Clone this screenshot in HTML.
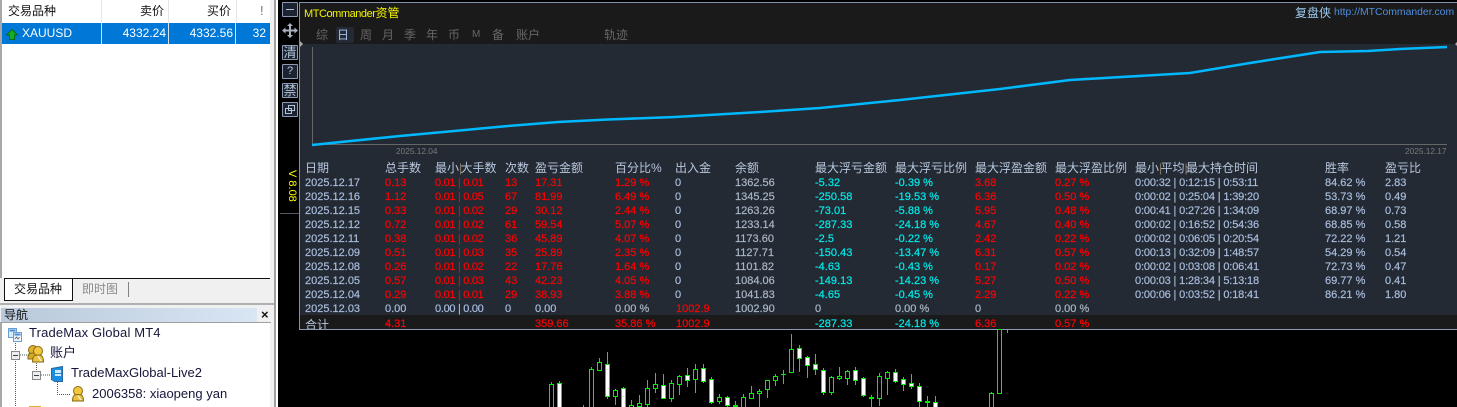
<!DOCTYPE html>
<html><head><meta charset="utf-8">
<style>
html,body{margin:0;padding:0;width:1457px;height:407px;overflow:hidden;background:#000;font-family:"Liberation Sans","Noto Sans CJK SC",sans-serif}
.a{position:absolute;white-space:nowrap}
#l{position:absolute;left:0;top:0;width:278px;height:407px;background:#f0f0f0}
.h{position:absolute;top:0;font-size:12px;line-height:22px;color:#111}
.s{position:absolute;top:23px;height:21px;font-size:12px;line-height:21px;color:#fff;text-align:right}
.t{position:absolute;font-size:13px;line-height:16px;color:#16163a;white-space:nowrap}
.b{position:absolute;left:282px;width:14px;height:13px;border:1px solid #8b9ab5;background:#1b2430;color:#b6c4da;font-size:13px;line-height:13px;text-align:center;overflow:hidden;border-radius:1px}
.m{position:absolute;top:27px;font-size:12px;line-height:16px;color:#666}
.r{position:absolute;left:300px;width:1157px;height:14px;font-size:11px;line-height:14px;color:#a8bcdc;-webkit-text-stroke:.2px}
.r span{position:absolute;top:0;white-space:nowrap}
.tot span{top:1px}
.hd{font-size:12px;color:#b8c7de;-webkit-text-stroke:0}
.c1{left:5px}.c2{left:85px}.c3{left:135px;letter-spacing:-.3px}.c4{left:205px}.c5{left:235px}.c6{left:315px}.c7{left:375px}.c8{left:435px}.c9{left:515px}.c10{left:595px}.c11{left:675px}.c12{left:755px}.c13{left:835px;letter-spacing:-.15px}.c14{left:1025px}.c15{left:1085px}
.hd .c3,.hd .c13{letter-spacing:0}
.e{color:#ff0000}.y{color:#00ecec}.g{color:#aab6c6}
i{font-style:normal;display:inline-block;width:1.5px;color:#8a7a60}
</style></head><body>
<div id="l">
 <div class="a" style="left:0;top:0;width:2px;height:278px;background:#a8a8a8"></div>
 <div class="a" style="left:2px;top:0;width:268px;height:278px;background:#fff"></div>
 <div class="a" style="left:101px;top:0;width:1px;height:22px;background:#e5e5e5"></div>
 <div class="a" style="left:168px;top:0;width:1px;height:22px;background:#e5e5e5"></div>
 <div class="a" style="left:236px;top:0;width:1px;height:22px;background:#e5e5e5"></div>
 <div class="h" style="left:8px">交易品种</div>
 <div class="h" style="left:140px">卖价</div>
 <div class="h" style="left:207px">买价</div>
 <div class="h" style="left:260px;color:#777;font-size:13px">!</div>
 <div class="a" style="left:2px;top:23px;width:268px;height:21px;background:#0078d7"></div>
 <div class="a" style="left:101px;top:23px;width:1px;height:21px;background:#cfe3f5"></div>
 <div class="a" style="left:168px;top:23px;width:1px;height:21px;background:#cfe3f5"></div>
 <div class="a" style="left:235px;top:23px;width:1px;height:21px;background:#cfe3f5"></div>
 <svg class="a" style="left:6px;top:29px" width="12" height="11"><path d="M6 .5 11.500 6H8.500V10.500H3.500V6H.5Z" fill="#12b020" stroke="#0a6a20"/></svg>
 <div class="s" style="left:22px;text-align:left">XAUUSD</div>
 <div class="s" style="left:102px;width:64px">4332.24</div>
 <div class="s" style="left:169px;width:64px">4332.56</div>
 <div class="s" style="left:236px;width:30px">32</div>
 <div class="a" style="left:270px;top:0;width:4px;height:407px;background:#f0f0f0"></div>
 <div class="a" style="left:274px;top:0;width:2px;height:407px;background:#9f9f9f"></div>
 <div class="a" style="left:276px;top:0;width:2px;height:407px;background:#fff"></div>
 <div class="a" style="left:4px;top:278px;width:266px;height:1px;background:#111"></div>
 <div class="a" style="left:4px;top:278px;width:67px;height:21px;background:#fff;border:1px solid #111"></div>
 <div class="a" style="left:14px;top:281px;font-size:12px;line-height:17px;color:#111">交易品种</div>
 <div class="a" style="left:82px;top:281px;font-size:12px;line-height:17px;color:#8a8a8a">即时图</div>
 <div class="a" style="left:128px;top:282px;width:1px;height:15px;background:#808080"></div>
 <div class="a" style="left:0;top:303px;width:274px;height:2px;background:#b0b0b0"></div>
 <div class="a" style="left:1px;top:308px;width:256px;height:14px;background:linear-gradient(90deg,#b9c8da,#d8e6f4)"></div>
 <div class="a" style="left:4px;top:307px;font-size:12px;line-height:16px;color:#111">导航</div>
 <div class="a" style="left:261px;top:307px;font-size:13px;line-height:15px;font-weight:bold;color:#111">×</div>
 <div class="a" style="left:0;top:322px;width:271px;height:1px;background:#a0a0a0"></div>
 <div class="a" style="left:0;top:323px;width:2px;height:84px;background:#a8a8a8"></div>
 <div class="a" style="left:2px;top:323px;width:268px;height:84px;background:#fff"></div>
 <svg class="a" style="left:0;top:323px" width="100" height="84">
  <path d="M15.500 20V84M36.500 36V47M57.500 59V71.500H70M20 32H27M41 52H50" fill="none" stroke="#555" stroke-dasharray="1 1"/>
  <rect x="8.500" y="5.500" width="8" height="9" fill="#d9ecfb" stroke="#6aa0d0"/><rect x="13.500" y="9.500" width="8" height="9" fill="#eef7ff" stroke="#6aa0d0"/><path d="M9.500 7.500h6M14.500 11.500h6" stroke="#4a8ad0" stroke-width="2"/><path d="M15 16l1.500-2 1.500 2 1.500-2" fill="none" stroke="#555" stroke-width=".7"/>
  <rect x="11.500" y="28.500" width="8" height="8" fill="#eee" stroke="#888"/><path d="M13 32.500h5" stroke="#345"/>
  <rect x="32.500" y="48.500" width="8" height="8" fill="#eee" stroke="#888"/><path d="M34 52.500h5" stroke="#345"/>
  <circle cx="31" cy="33" r="3.500" fill="#33c033"/>
  <circle cx="33" cy="27" r="4.500" fill="#e0b030" stroke="#8a6a10"/><path d="M28 36c0-6 3-6 5-6s5 0 5 6Z" fill="#d8a828" stroke="#8a6a10"/>
  <circle cx="38" cy="28" r="4.500" fill="#f0c840" stroke="#8a6a10"/><path d="M32.500 39c0-7 3-7 5.500-7s5.500 0 5.500 7Z" fill="#ecc040" stroke="#8a6a10"/><path d="M38 33l3 5" stroke="#fff"/>
  <path d="M51.500 45.500 62.500 43.500V58.500L54.500 58.500 51.500 56.500Z" fill="#1a8de0" stroke="#2a6aa0"/><path d="M55 47h6v3h-6ZM55 51h6v2h-6Z" fill="#cfeafc"/>
  <circle cx="78" cy="68" r="4.500" fill="#f0c840" stroke="#8a6a10"/><path d="M72.500 78c0-6.500 3-6.500 5.500-6.500s5.500 0 5.500 6.500Z" fill="#ecc040" stroke="#8a6a10"/><path d="M78 73l3 4" stroke="#fff"/>
  <rect x="29" y="83" width="12" height="1" fill="#e0b030"/>
 </svg>
 <div class="t" style="left:29px;top:325px;letter-spacing:.15px">TradeMax Global MT4</div>
 <div class="t" style="left:50px;top:345px">账户</div>
 <div class="t" style="left:71px;top:365px">TradeMaxGlobal-Live2</div>
 <div class="t" style="left:92px;top:386px">2006358: xiaopeng yan</div>
</div>

<div class="b" style="top:2px;"><span style="display:block;width:8px;height:1px;background:#b6c4da;margin:6px auto 0"></span></div>
<svg class="a" style="left:282px;top:23px" width="16" height="15"><path d="M8 0 11 3H9V6.500H12.500V4.500L16 7.500 12.500 10.500V8.500H9V12H11L8 15 5 12H7V8.500H3.500V10.500L0 7.500 3.500 4.500V6.500H7V3H5Z" fill="#a9b1bd"/></svg>
<div class="b" style="top:45px">清</div>
<div class="b" style="top:64px;font-size:11px">?</div>
<div class="b" style="top:83px">禁</div>
<div class="b" style="top:102px"><svg width="14" height="13" style="display:block"><path d="M5.500 2.500h6v5h-6ZM2.500 5.500h6v5h-6Z" fill="#1b2430" stroke="#b6c4da"/></svg></div>
<div class="a" style="left:280px;top:213px;width:19px;height:1px;background:#556"></div>
<div class="a" style="left:286px;top:170px;writing-mode:vertical-rl;font-size:11px;line-height:12px;color:#ffff00">V 8.08</div>

<div class="a" style="left:299px;top:2px;width:1158px;height:327px;background:#232a33"></div>
<div class="a" style="left:299px;top:2px;width:1158px;height:1px;background:#8290ab"></div>
<div class="a" style="left:299px;top:2px;width:1px;height:328px;background:#8290ab"></div>
<div class="a" style="left:299px;top:329px;width:1158px;height:1px;background:#8c9ab4"></div>
<div class="a" style="left:300px;top:3px;width:1157px;height:41px;background:#1a1a1a"></div>
<div class="a" style="left:300px;top:315px;width:1157px;height:14px;background:#1a1a1a"></div>
<div class="a" style="left:304px;top:5px;font-size:11px;line-height:16px;color:#f4f400;letter-spacing:-.45px">MTCommander<span style="font-size:12px;letter-spacing:0">资管</span></div>
<div class="a" style="left:1295px;top:5px;font-size:12px;line-height:16px;color:#9ccaf0">复盘侠</div>
<div class="a" style="left:1334px;top:5px;font-size:10.4px;line-height:16px;color:#4f8fe0">http://MTCommander.com</div>
<div class="a" style="left:336px;top:27px;width:18px;height:16px;background:#232a33;border-radius:2px"></div>
<div class="m" style="left:316px">综</div>
<div class="m" style="left:337px;color:#a8c2ea">日</div>
<div class="m" style="left:360px">周</div>
<div class="m" style="left:382px">月</div>
<div class="m" style="left:404px">季</div>
<div class="m" style="left:426px">年</div>
<div class="m" style="left:448px">币</div>
<div class="m" style="left:472px;font-size:10px;color:#666">M</div>
<div class="m" style="left:492px">备</div>
<div class="m" style="left:516px">账户</div>
<div class="m" style="left:604px">轨迹</div>

<svg class="a" style="left:0;top:0" width="1457" height="160">
 <path d="M300 41l3 3-3 3Z" fill="#aaa"/><path d="M1457 42v4l-2-2Z" fill="#aaa"/>
 <path d="M312.500 47V144.500H1447" fill="none" stroke="#666" shape-rendering="crispEdges"/>
 <polyline points="312,145 400,136 465,130 508,126 558,122 608,119.500 675,117 760,112 820,108 900,100 1000,89 1070,80 1190,73 1250,63 1320,52 1368,51 1400,49 1447,47" fill="none" stroke="#00b8ff" stroke-width="2.600"/>
 <text x="396" y="154" font-size="8.300" fill="#7a7a7a" font-family="Liberation Sans">2025.12.04</text>
 <text x="1405" y="154" font-size="8.300" fill="#7a7a7a" font-family="Liberation Sans">2025.12.17</text>
</svg>

<div class="r hd" style="top:161px"><span class="c1">日期</span><span class="c2">总手数</span><span class="c3">最小<i>|</i>大手数</span><span class="c4">次数</span><span class="c5">盈亏金额</span><span class="c6">百分比%</span><span class="c7">出入金</span><span class="c8">余额</span><span class="c9">最大浮亏金额</span><span class="c10">最大浮亏比例</span><span class="c11">最大浮盈金额</span><span class="c12">最大浮盈比例</span><span class="c13">最小<i>|</i>平均<i>|</i>最大持仓时间</span><span class="c14">胜率</span><span class="c15">盈亏比</span></div>

<div class="r" style="top:176px"><span class="c1">2025.12.17</span><span class="c2 e">0.13</span><span class="c3 e">0.01 | 0.01</span><span class="c4 e">13</span><span class="c5 e">17.31</span><span class="c6 e">1.29 %</span><span class="c7">0</span><span class="c8 g">1362.56</span><span class="c9 y">-5.32</span><span class="c10 y">-0.39 %</span><span class="c11 e">3.68</span><span class="c12 e">0.27 %</span><span class="c13">0:00:32 | 0:12:15 | 0:53:11</span><span class="c14">84.62 %</span><span class="c15">2.83</span></div>
<div class="r" style="top:190px"><span class="c1">2025.12.16</span><span class="c2 e">1.12</span><span class="c3 e">0.01 | 0.05</span><span class="c4 e">67</span><span class="c5 e">81.99</span><span class="c6 e">6.49 %</span><span class="c7">0</span><span class="c8 g">1345.25</span><span class="c9 y">-250.58</span><span class="c10 y">-19.53 %</span><span class="c11 e">6.36</span><span class="c12 e">0.50 %</span><span class="c13">0:00:02 | 0:25:04 | 1:39:20</span><span class="c14">53.73 %</span><span class="c15">0.49</span></div>
<div class="r" style="top:204px"><span class="c1">2025.12.15</span><span class="c2 e">0.33</span><span class="c3 e">0.01 | 0.02</span><span class="c4 e">29</span><span class="c5 e">30.12</span><span class="c6 e">2.44 %</span><span class="c7">0</span><span class="c8 g">1263.26</span><span class="c9 y">-73.01</span><span class="c10 y">-5.88 %</span><span class="c11 e">5.95</span><span class="c12 e">0.48 %</span><span class="c13">0:00:41 | 0:27:26 | 1:34:09</span><span class="c14">68.97 %</span><span class="c15">0.73</span></div>
<div class="r" style="top:218px"><span class="c1">2025.12.12</span><span class="c2 e">0.72</span><span class="c3 e">0.01 | 0.02</span><span class="c4 e">61</span><span class="c5 e">59.54</span><span class="c6 e">5.07 %</span><span class="c7">0</span><span class="c8 g">1233.14</span><span class="c9 y">-287.33</span><span class="c10 y">-24.18 %</span><span class="c11 e">4.67</span><span class="c12 e">0.40 %</span><span class="c13">0:00:02 | 0:16:52 | 0:54:36</span><span class="c14">68.85 %</span><span class="c15">0.58</span></div>
<div class="r" style="top:232px"><span class="c1">2025.12.11</span><span class="c2 e">0.38</span><span class="c3 e">0.01 | 0.02</span><span class="c4 e">36</span><span class="c5 e">45.89</span><span class="c6 e">4.07 %</span><span class="c7">0</span><span class="c8 g">1173.60</span><span class="c9 y">-2.5</span><span class="c10 y">-0.22 %</span><span class="c11 e">2.42</span><span class="c12 e">0.22 %</span><span class="c13">0:00:02 | 0:06:05 | 0:20:54</span><span class="c14">72.22 %</span><span class="c15">1.21</span></div>
<div class="r" style="top:246px"><span class="c1">2025.12.09</span><span class="c2 e">0.51</span><span class="c3 e">0.01 | 0.03</span><span class="c4 e">35</span><span class="c5 e">25.89</span><span class="c6 e">2.35 %</span><span class="c7">0</span><span class="c8 g">1127.71</span><span class="c9 y">-150.43</span><span class="c10 y">-13.47 %</span><span class="c11 e">6.31</span><span class="c12 e">0.57 %</span><span class="c13">0:00:13 | 0:32:09 | 1:48:57</span><span class="c14">54.29 %</span><span class="c15">0.54</span></div>
<div class="r" style="top:260px"><span class="c1">2025.12.08</span><span class="c2 e">0.26</span><span class="c3 e">0.01 | 0.02</span><span class="c4 e">22</span><span class="c5 e">17.76</span><span class="c6 e">1.64 %</span><span class="c7">0</span><span class="c8 g">1101.82</span><span class="c9 y">-4.63</span><span class="c10 y">-0.43 %</span><span class="c11 e">0.17</span><span class="c12 e">0.02 %</span><span class="c13">0:00:02 | 0:03:08 | 0:06:41</span><span class="c14">72.73 %</span><span class="c15">0.47</span></div>
<div class="r" style="top:274px"><span class="c1">2025.12.05</span><span class="c2 e">0.57</span><span class="c3 e">0.01 | 0.03</span><span class="c4 e">43</span><span class="c5 e">42.23</span><span class="c6 e">4.05 %</span><span class="c7">0</span><span class="c8 g">1084.06</span><span class="c9 y">-149.13</span><span class="c10 y">-14.23 %</span><span class="c11 e">5.27</span><span class="c12 e">0.50 %</span><span class="c13">0:00:03 | 1:28:34 | 5:13:18</span><span class="c14">69.77 %</span><span class="c15">0.41</span></div>
<div class="r" style="top:288px"><span class="c1">2025.12.04</span><span class="c2 e">0.29</span><span class="c3 e">0.01 | 0.01</span><span class="c4 e">29</span><span class="c5 e">38.93</span><span class="c6 e">3.88 %</span><span class="c7">0</span><span class="c8 g">1041.83</span><span class="c9 y">-4.65</span><span class="c10 y">-0.45 %</span><span class="c11 e">2.29</span><span class="c12 e">0.22 %</span><span class="c13">0:00:06 | 0:03:52 | 0:18:41</span><span class="c14">86.21 %</span><span class="c15">1.80</span></div>
<div class="r" style="top:302px"><span class="c1">2025.12.03</span><span class="c2">0.00</span><span class="c3">0.00 | 0.00</span><span class="c4">0</span><span class="c5">0.00</span><span class="c6 g">0.00 %</span><span class="c7 e" style="left:376px">1002.9</span><span class="c8 g">1002.90</span><span class="c9 g">0</span><span class="c10 g">0.00 %</span><span class="c11 g">0</span><span class="c12 g">0.00 %</span></div>
<div class="r tot" style="top:316px;height:13px;overflow:hidden"><span class="c1 hd" style="top:2px">合计</span><span class="c2 e">4.31</span><span class="c5 e">359.66</span><span class="c6 e">35.86 %</span><span class="c7 e" style="left:376px">1002.9</span><span class="c9 y">-287.33</span><span class="c10 y">-24.18 %</span><span class="c11 e">6.36</span><span class="c12 e">0.57 %</span></div>

<svg class="a" style="left:0;top:325px" width="1457" height="82" shape-rendering="crispEdges">
 <path stroke="#00f000" fill="none" d="M551.500 57V82M559.500 56V82M583.500 80V82M591.500 42V82M599.500 33V46M607.500 27V74M615.500 64V80M623.500 62V82M631.500 75V82M639.500 70V82M647.500 55V82M655.500 48V68M663.500 49V73M671.500 55V77M679.500 50V70M687.500 43V62M695.500 39V68M703.500 39V58M711.500 52V79M719.500 69V79M727.500 71V82M735.500 76V82M743.500 69V82M751.500 61V74M759.500 64V82M767.500 64V73M775.500 49V61M783.500 45V59M781 49.500H786M791.500 9V48M799.500 20V47M807.500 31V53M815.500 29V50M823.500 43V70M831.500 51V70M839.500 42V55M847.500 45V60M855.500 42V60M863.500 52V72M871.500 70V82M879.500 48V81M887.500 46V70M895.500 44V58M903.500 52V66M911.500 49V64M919.500 58V82M927.500 71V82M935.500 71V82M991.500 67V82M1007.500 5V8"/>
 <g fill="#000" stroke="#00f000">
  <rect x="549.500" y="59.500" width="4" height="30"/><rect x="589.500" y="44.500" width="4" height="45"/><rect x="597.500" y="37.500" width="4" height="8"/><rect x="613.500" y="65.500" width="4" height="6"/><rect x="629.500" y="80.500" width="4" height="6"/><rect x="637.500" y="78.500" width="4" height="3"/><rect x="645.500" y="63.500" width="4" height="16"/><rect x="653.500" y="59.500" width="4" height="4"/><rect x="669.500" y="58.500" width="4" height="15"/><rect x="677.500" y="51.500" width="4" height="8"/><rect x="693.500" y="44.500" width="4" height="10"/><rect x="717.500" y="72.500" width="4" height="4"/><rect x="741.500" y="72.500" width="4" height="15"/><rect x="749.500" y="68.500" width="4" height="5"/><rect x="757.500" y="66.500" width="4" height="2"/><rect x="765.500" y="55.500" width="4" height="9"/><rect x="773.500" y="51.500" width="4" height="4"/><rect x="789.500" y="24.500" width="4" height="23"/><rect x="829.500" y="52.500" width="4" height="15"/><rect x="837.500" y="51.500" width="4" height="2"/><rect x="845.500" y="46.500" width="4" height="7"/><rect x="877.500" y="51.500" width="4" height="22"/><rect x="885.500" y="47.500" width="4" height="6"/><rect x="989.500" y="68.500" width="4" height="20"/><rect x="997.500" y="4.500" width="4" height="64"/>
 </g>
 <g fill="#fff" stroke="#00f000">
  <rect x="557.500" y="58.500" width="4" height="30"/><rect x="605.500" y="39.500" width="4" height="32"/><rect x="621.500" y="63.500" width="4" height="25"/><rect x="661.500" y="60.500" width="4" height="13"/><rect x="685.500" y="50.500" width="4" height="5"/><rect x="701.500" y="43.500" width="4" height="13"/><rect x="709.500" y="54.500" width="4" height="23"/><rect x="725.500" y="72.500" width="4" height="8"/><rect x="797.500" y="23.500" width="4" height="10"/><rect x="805.500" y="32.500" width="4" height="8"/><rect x="813.500" y="39.500" width="4" height="5"/><rect x="821.500" y="45.500" width="4" height="22"/><rect x="853.500" y="45.500" width="4" height="10"/><rect x="861.500" y="53.500" width="4" height="17"/><rect x="893.500" y="47.500" width="4" height="9"/><rect x="901.500" y="54.500" width="4" height="5"/><rect x="909.500" y="58.500" width="4" height="3"/><rect x="917.500" y="61.500" width="4" height="15"/><rect x="933.500" y="77.500" width="4" height="10"/>
 </g>
 <g fill="#00f000">
  <rect x="733" y="80" width="5" height="2"/><rect x="869" y="72" width="5" height="2"/><rect x="925" y="76" width="5" height="2"/>
 </g>
</svg>
</body></html>
